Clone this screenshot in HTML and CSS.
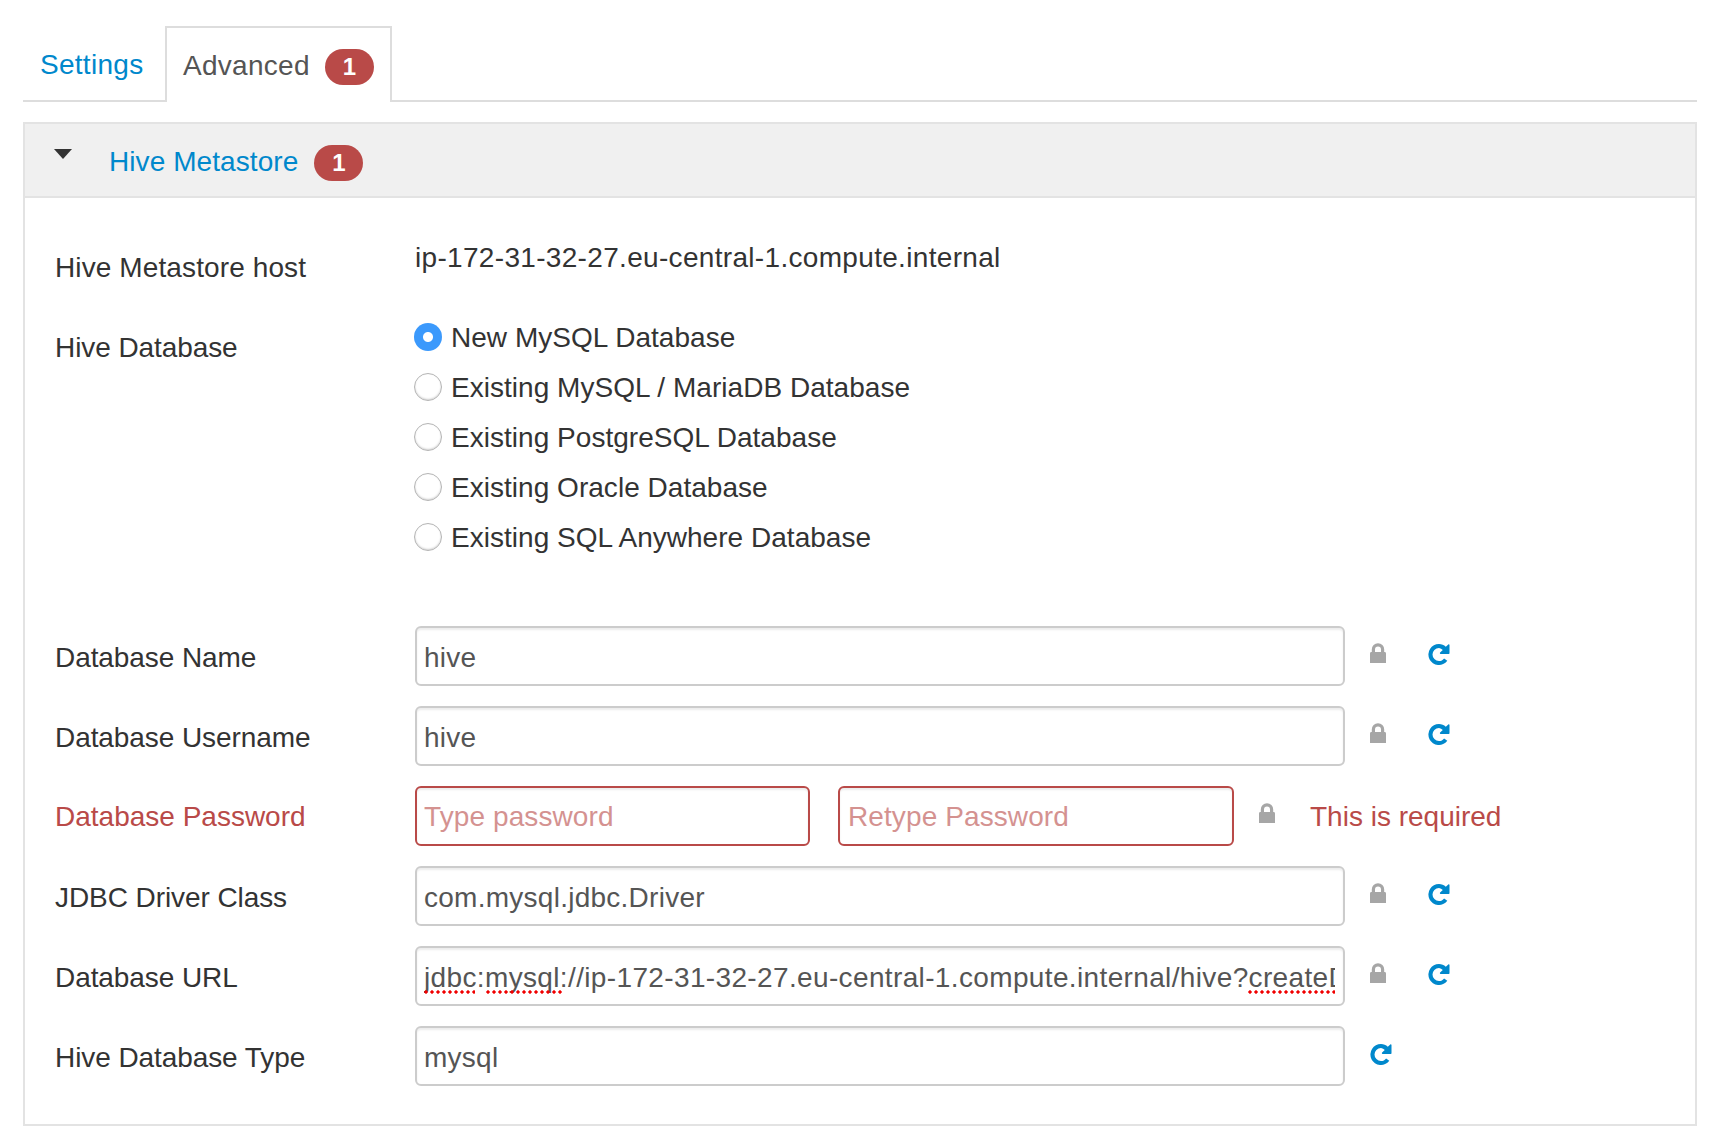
FILE: index.html
```html
<!DOCTYPE html>
<html lang="en">
<head>
<meta charset="utf-8">
<title>Hive Advanced</title>
<link rel="stylesheet" href="styles.css">
</head>
<body>
<svg class="defs" width="0" height="0" aria-hidden="true">
  <symbol id="lock" viewBox="0 0 16 20"><path d="M1.800 9V6.500a6.200 6.200 0 0 1 12.400 0V9h.400A1.400 1.400 0 0 1 16 10.400V20H0v-9.600A1.400 1.400 0 0 1 1.400 9zM5 9h6V6.500a3 3 0 0 0-6 0z"/></symbol>
  <symbol id="repeat" viewBox="0 0 22 22"><path d="M11 1c2.600 0 5 1 6.800 2.700L20.300 1.400c.5-.5 1.200-.1 1.200.5v8.300c0 .4-.3.700-.7.700h-8.200c-.7 0-1-.8-.5-1.300l2.700-2.600A6 6 0 0 0 11 5a6.500 6.500 0 0 0 0 13c2.100 0 3.900-1 5.100-2.600l3.200 2.400A10.500 10.500 0 1 1 11 1z"/></symbol>
</svg>
<div class="page">
  <ul class="tabs">
    <li class="tab"><a class="link" href="#">Settings</a></li>
    <li class="tab tab-active">Advanced <span class="badge">1</span></li>
  </ul>
  <section class="panel">
    <header class="panel-heading">
      <span class="caret"></span>
      <a class="link panel-title" href="#">Hive Metastore</a>
      <span class="badge">1</span>
    </header>
    <div class="panel-body">
      <div class="row row-host">
        <div class="label label-host">Hive Metastore host</div>
        <div class="value">ip-172-31-32-27.eu-central-1.compute.internal</div>
      </div>
      <div class="row row-radios">
        <div class="label label-radios">Hive Database</div>
        <div class="radios">
          <label class="radio"><span class="radio-dot radio-on"></span>New MySQL Database</label>
          <label class="radio"><span class="radio-dot"></span>Existing MySQL / MariaDB Database</label>
          <label class="radio"><span class="radio-dot"></span>Existing PostgreSQL Database</label>
          <label class="radio"><span class="radio-dot"></span>Existing Oracle Database</label>
          <label class="radio"><span class="radio-dot"></span>Existing SQL Anywhere Database</label>
        </div>
      </div>
      <div class="row field">
        <div class="label">Database Name</div>
        <input class="input" type="text" value="hive">
        <svg class="icon icon-lock"><use href="#lock"/></svg>
        <svg class="icon icon-repeat"><use href="#repeat"/></svg>
      </div>
      <div class="row field">
        <div class="label">Database Username</div>
        <input class="input" type="text" value="hive">
        <svg class="icon icon-lock"><use href="#lock"/></svg>
        <svg class="icon icon-repeat"><use href="#repeat"/></svg>
      </div>
      <div class="row field field-error">
        <div class="label">Database Password</div>
        <input class="input input-half" type="text" placeholder="Type password">
        <input class="input input-half input-second" type="text" placeholder="Retype Password">
        <svg class="icon icon-lock"><use href="#lock"/></svg>
        <span class="error-text">This is required</span>
      </div>
      <div class="row field">
        <div class="label">JDBC Driver Class</div>
        <input class="input" type="text" value="com.mysql.jdbc.Driver">
        <svg class="icon icon-lock"><use href="#lock"/></svg>
        <svg class="icon icon-repeat"><use href="#repeat"/></svg>
      </div>
      <div class="row field">
        <div class="label">Database URL</div>
        <input class="input input-url" type="text" value="jdbc:mysql://ip-172-31-32-27.eu-central-1.compute.internal/hive?createDatabaseIfNotExist=true">
        <svg class="icon icon-lock"><use href="#lock"/></svg>
        <svg class="icon icon-repeat"><use href="#repeat"/></svg>
        <span class="squiggle squiggle-jdbc"></span>
        <span class="squiggle squiggle-mysql"></span>
        <span class="squiggle squiggle-create"></span>
      </div>
      <div class="row field">
        <div class="label">Hive Database Type</div>
        <input class="input" type="text" value="mysql">
        <svg class="icon icon-repeat icon-repeat-only"><use href="#repeat"/></svg>
      </div>
    </div>
  </section>
</div>
</body>
</html>
```

FILE: styles.css
```css
* { box-sizing: border-box; }
html, body { margin: 0; padding: 0; background: #fff; }
body { font-family: "Liberation Sans", Arial, sans-serif; font-size: 28px; line-height: 40px; color: #333; }
.defs { position: absolute; }
.page { padding: 26px 31px 0 23px; }
.link { color: #0088cc; text-decoration: none; }

.tabs { display: flex; list-style: none; margin: 0; padding: 0; border-bottom: 2px solid #ddd; height: 76px; letter-spacing: .28px; }
.tab { padding: 19px 0 0 17px; width: 142px; height: 76px; }
.tab-active { width: 227px; padding: 18px 0 0 16px; margin-bottom: -2px; background: #fff; border: 2px solid #ddd; border-bottom: 0; color: #555; }

.badge { display: inline-block; width: 49px; height: 36px; margin-left: 7px; border-radius: 18px; background: #b94a48; color: #fff; font-size: 24px; font-weight: 700; line-height: 36px; text-align: center; letter-spacing: 0; position: relative; top: 0; }

.panel { margin-top: 20px; border: 2px solid #e3e3e3; height: 1004px; }
.panel-heading { display: flex; align-items: flex-start; height: 74px; background: #f0f0f0; border-bottom: 2px solid #e3e3e3; padding: 18px 0 0 29px; }
.caret { width: 0; height: 0; margin-top: 7px; border-style: solid; border-width: 10px 9px 0; border-color: #333 transparent transparent; }
.panel-title { margin-left: 37px; letter-spacing: .08px; }
.panel-heading .badge { margin-left: 16px; top: 3px; }

.panel-body { padding: 39px 0 0 30px; position: relative; }
.row { display: flex; align-items: flex-start; position: relative; }
.label { width: 360px; flex: none; padding-top: 11px; letter-spacing: -.08px; }
.label-host { letter-spacing: .11px; }
.row-host { height: 75px; }
.value { line-height: 40px; padding-top: 1px; letter-spacing: .32px; }
.row-radios { height: 314px; }
.label-radios { padding-top: 16px; }
.radios { display: flex; flex-direction: column; margin-left: -1px; letter-spacing: .03px; }
.radio { display: flex; align-items: center; height: 50px; padding-top: 1px; }
.radio-dot { width: 28px; height: 28px; margin: -2px 9px 0 0; border-radius: 50%; background: #fff; border: 1px solid #b5b5b5; box-shadow: inset 0 -1px 2px rgba(0,0,0,.18); flex: none; }
.radio-on { border: 0; box-shadow: none; background: radial-gradient(circle, #fff 0 4.500px, #3b99fc 5.500px); }

.field { height: 80px; }
.field > .label { padding-top: 12px; }
.input { display: block; flex: none; width: 930px; height: 60px; padding: 3px 8px 0 7px; margin: 0; border: 2px solid #ccc; border-radius: 6px; background: #fff; box-shadow: inset 0 2px 2px rgba(0,0,0,.075); color: #555; font: 28px/53px "Liberation Sans", Arial, sans-serif; letter-spacing: .26px; outline: 0; }
.input-url { letter-spacing: .36px; }
.input-half { width: 395px; letter-spacing: .1px; padding-top: 2px; }
.input-second { width: 396px; margin-left: 28px; padding-left: 8px; }
.input::placeholder { color: #b94a48; opacity: .6; }

.field-error > .label, .error-text { color: #b94a48; }
.field-error > .label { padding-top: 11px; letter-spacing: 0; }
.field-error .input { border-color: #b94a48; }
.error-text { margin-left: 35px; padding-top: 11px; }

.icon { display: block; flex: none; }
.icon-lock { width: 16px; height: 20px; margin: 17px 0 0 25px; fill: #a6a6a6; }
.icon-repeat { width: 22px; height: 22px; margin: 17px 0 0 42px; fill: #0088cc; }
.icon-repeat-only { margin-left: 25px; }

.squiggle { position: absolute; top: 44px; height: 4px; background: radial-gradient(circle at 2px 2px, #f00000 1.400px, transparent 1.900px) 0 0 / 6px 4px repeat-x; }
.squiggle-jdbc { left: 369px; width: 51px; }
.squiggle-mysql { left: 431px; width: 77px; }
.squiggle-create { left: 1193px; width: 87px; }
```
